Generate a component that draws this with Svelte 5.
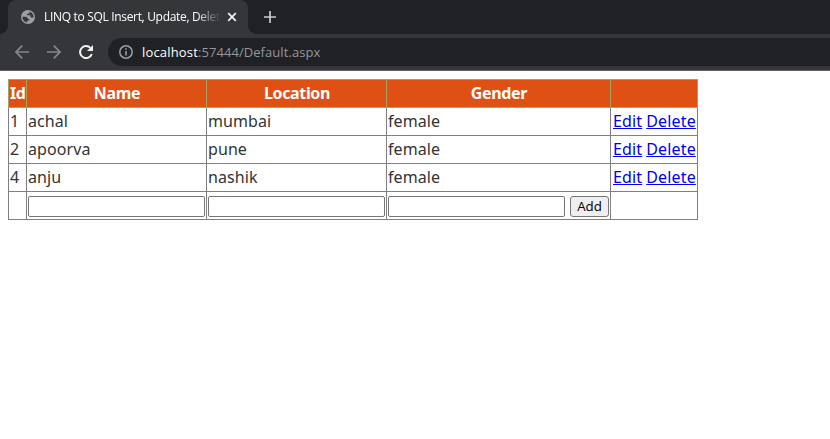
<script>
  const people = [
    { id: 1, name: 'achal', location: 'mumbai', gender: 'female' },
    { id: 2, name: 'apoorva', location: 'pune', gender: 'female' },
    { id: 4, name: 'anju', location: 'nashik', gender: 'female' }
  ];
</script>

<div class="browser">
  <div class="strip">
    <div class="tab">
      <svg class="globe" width="14" height="14" viewBox="0 0 14 14">
        <circle cx="7" cy="7" r="7" fill="#9aa0a6" />
        <path d="M1.4 6.8 H4.5 C6 6.8 6.9 7.6 6.9 8.9 H8.3 V10.4 H6.2 V12.4 C3.4 12.2 1.3 9.8 1.4 6.8Z M8.6 1.6 V2.6 C8.6 3.4 8 3.8 7.2 3.8 H6.2 V5.2 H8.8 C9.4 5.2 9.6 5.7 9.6 6.3 V7.6 H12.6 C12.7 4.8 11.2 2.4 8.6 1.6Z" fill="#35363a" />
      </svg>
      <span class="title">LINQ to SQL Insert, Update, Delet</span>
      <svg class="close" width="10" height="10" viewBox="0 0 10 10"><path d="M1.2 1.2 L8.8 8.8 M8.8 1.2 L1.2 8.8" stroke="#f1f3f4" stroke-width="1.7" /></svg>
    </div>
    <svg class="plus" width="12" height="12" viewBox="0 0 12 12"><path d="M6 0 V12 M0 6 H12" stroke="#c8cacd" stroke-width="1.7" /></svg>
  </div>
  <div class="toolbar">
    <svg class="back" width="14" height="14" viewBox="0 0 14 14"><path d="M14 7 H1.5 M7.2 .7 L1 7 L7.2 13.3" fill="none" stroke="#85878a" stroke-width="1.7" /></svg>
    <svg class="forward" width="14" height="14" viewBox="0 0 14 14"><path d="M0 7 H12.5 M6.8 .7 L13 7 L6.8 13.3" fill="none" stroke="#85878a" stroke-width="1.7" /></svg>
    <svg class="reload" width="14" height="14" viewBox="0 0 14 14"><path d="M12.8 9 A6 6 0 1 1 11.4 2.9" fill="none" stroke="#f1f3f4" stroke-width="2" /><path d="M14 0 V6 H8Z" fill="#f1f3f4" /></svg>
    <div class="address">
      <svg width="14" height="14" viewBox="0 0 14 14"><circle cx="7" cy="7" r="6.2" fill="none" stroke="#9aa0a6" stroke-width="1.5" /><path d="M7 3.2 V4.8 M7 6 V10.6" stroke="#9aa0a6" stroke-width="1.6" /></svg>
      <span class="url"><b>localhost</b>:57444/Default.aspx</span>
    </div>
  </div>
</div>

<main>
  <table>
    <colgroup><col class="c-id" /><col class="c-text" /><col class="c-text" /><col class="c-gender" /><col class="c-links" /></colgroup>
    <thead>
      <tr><th class="id">Id</th><th>Name</th><th>Location</th><th>Gender</th><th></th></tr>
    </thead>
    <tbody>
      {#each people as p (p.id)}
        <tr>
          <td>{p.id}</td>
          <td>{p.name}</td>
          <td>{p.location}</td>
          <td>{p.gender}</td>
          <td><div class="links"><a href="#edit">Edit</a><a href="#delete">Delete</a></div></td>
        </tr>
      {/each}
      <tr>
        <td></td>
        <td><div class="field"><input type="text" aria-label="Name" /></div></td>
        <td><div class="field"><input type="text" aria-label="Location" /></div></td>
        <td><div class="field"><input type="text" aria-label="Gender" /><button>Add</button></div></td>
        <td></td>
      </tr>
    </tbody>
  </table>
</main>

<style>
  :global(body) { margin: 0; background: #fff; overflow: hidden; }
  .browser { font-family: "Open Sans", sans-serif; background: #202124; }
  .strip { height: 34px; display: flex; align-items: center; }
  .tab {
    position: relative; box-sizing: border-box; width: 240px; height: 34px; margin-left: 8px;
    padding: 0 11px 0 13px; display: flex; align-items: center;
    background: #35363a; border-radius: 8px 8px 0 0;
  }
  .tab::before, .tab::after { content: ""; position: absolute; bottom: 0; width: 8px; height: 8px; }
  .tab::before { left: -8px; background: radial-gradient(circle at 0 0, transparent 7.5px, #35363a 8px); }
  .tab::after { right: -8px; background: radial-gradient(circle at 100% 0, transparent 7.5px, #35363a 8px); }
  .globe { flex: none; }
  .title {
    width: 177px; flex: none; margin-left: 9px; white-space: nowrap;
    font-size: 12px; line-height: 20px; letter-spacing: -.32px; color: #fff;
    mask-image: linear-gradient(90deg, #000 152px, transparent 177px);
  }
  .close { margin-left: 6px; flex: none; }
  .plus { margin-left: 16px; }
  .toolbar {
    box-sizing: border-box; height: 37px; padding-left: 15px; display: flex; align-items: center;
    background: #35363a; border-bottom: 1px solid #626168;
  }
  .forward, .reload { margin-left: 18px; }
  .address {
    flex: 1; box-sizing: border-box; height: 28px; margin-left: 15px; padding-left: 11px;
    display: flex; align-items: center; background: #202124; border-radius: 14px 0 0 14px;
  }
  .url { margin-left: 9px; font-size: 13px; line-height: 20px; color: #94979b; letter-spacing: .06px; }
  .url b { font-weight: 400; color: #fff; letter-spacing: .17px; }
  main { padding: 8px; }
  table {
    width: 690px; table-layout: fixed; border-collapse: collapse; border: 1px solid #808080;
    font-family: "Noto Sans", sans-serif; font-size: 16px; color: #333;
  }
  .c-id { width: 18px; } .c-text { width: 180px; } .c-gender { width: 224px; } .c-links { width: 87px; }
  tr { height: 28px; }
  td, th { box-sizing: border-box; height: 28px; padding: 0 1px; border: 1px solid #808080; line-height: 25px; white-space: nowrap; }
  th { background: #df5015; color: #fff; border-color: #a9a15f; font-weight: 700; letter-spacing: -.35px; }
  th:not(.id) { padding-left: 2px; }
  td { letter-spacing: .08px; }
  .links { display: flex; gap: 4px; padding-left: 1px; }
  a { color: #00e; text-decoration: underline; letter-spacing: .15px; }
  .field { display: flex; align-items: center; justify-content: space-between; height: 25px; padding-top: 2px; box-sizing: border-box; }
  input { box-sizing: border-box; width: 177px; height: 21px; padding: 0; border: 1px solid #767676; border-radius: 2px; background: #fff; }
  button {
    box-sizing: border-box; width: 39px; height: 21px; padding: 0 0 1px; border: 1px solid #767676; border-radius: 3px;
    background: #efefef; color: #000; font: 13.333px/18px "Open Sans", sans-serif;
  }
</style>
